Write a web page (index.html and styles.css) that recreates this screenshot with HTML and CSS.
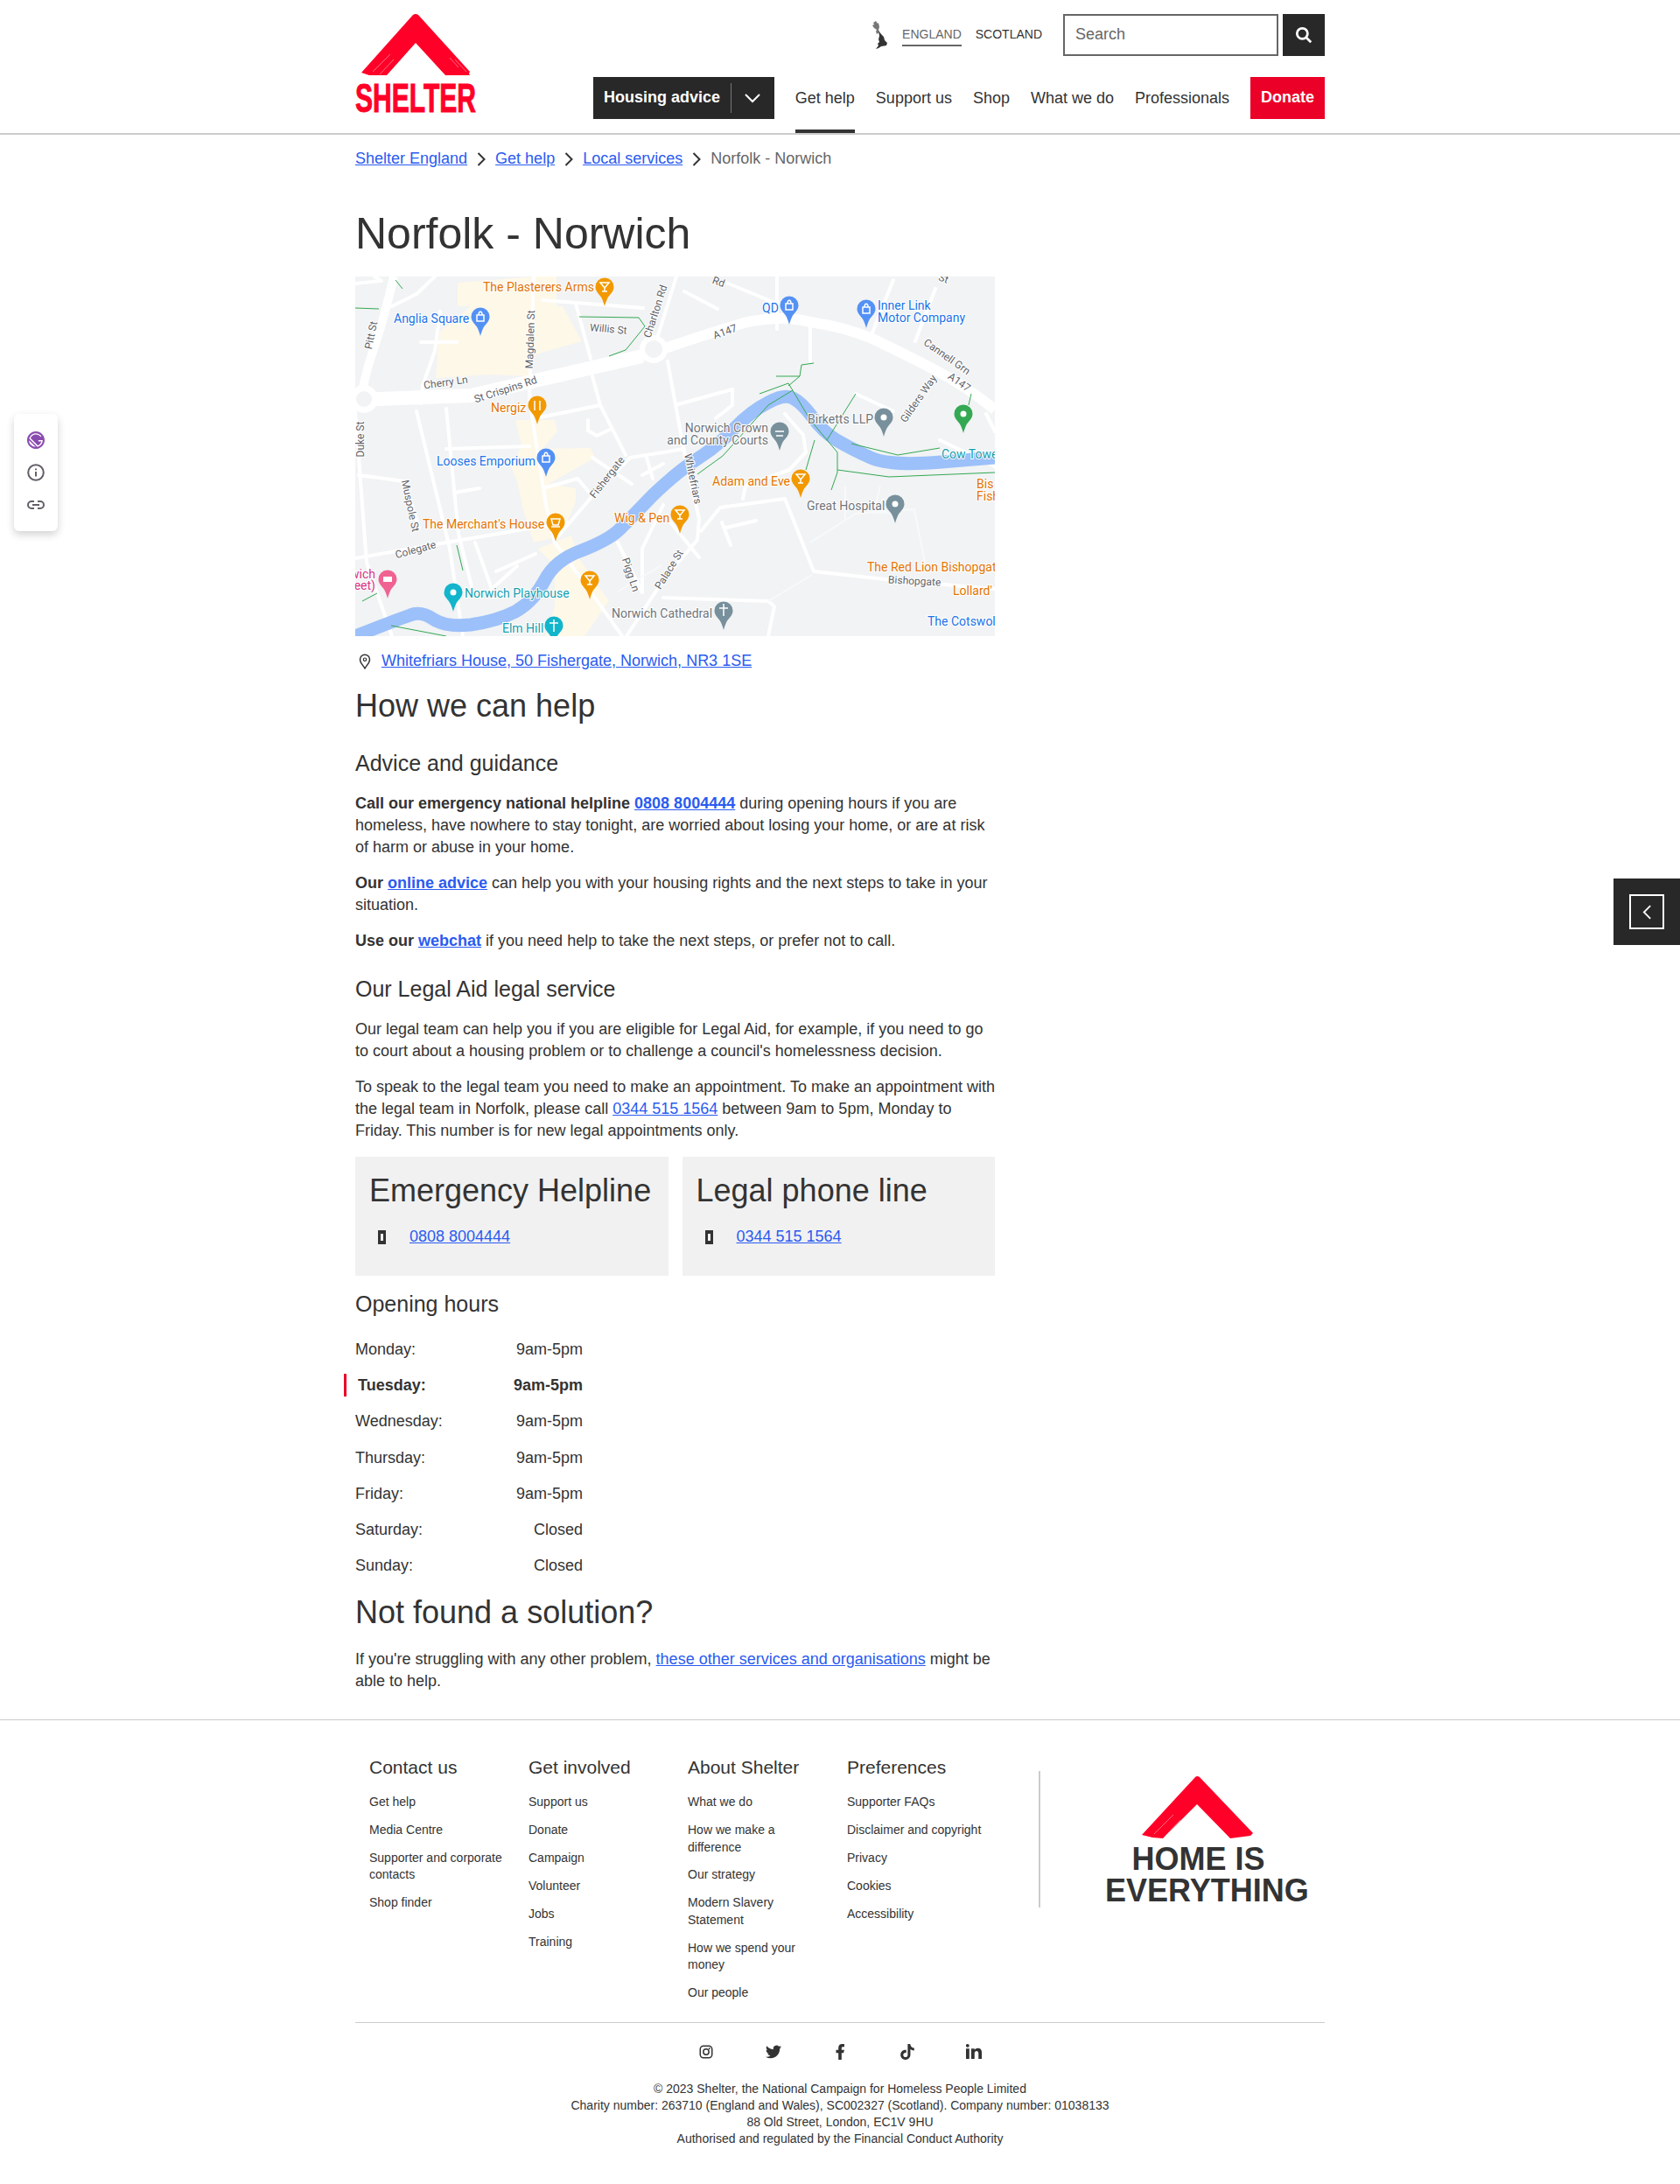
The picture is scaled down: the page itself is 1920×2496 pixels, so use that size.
FILE: index.html
```html
<!DOCTYPE html>
<html lang="en">
<head>
    <meta charset="UTF-8">
    <meta name="viewport" content="width=device-width, initial-scale=1.0">
    <title>Norfolk - Norwich</title>
    <link rel="stylesheet" href="styles.css">
</head>
<body>

    <!-- Floating panels -->
    <div class="side-panel">
        <svg viewBox="0 0 28 28" width="20" height="20"><circle cx="14" cy="14" r="14" fill="#fff"/><path class="gatsby" d="M14 0C6.3 0 0 6.3 0 14s6.3 14 14 14 14-6.3 14-14S21.7 0 14 0zM6.2 21.8C4.1 19.7 3 16.9 3 14.2L13.9 25c-2.8-.1-5.6-1.1-7.7-3.2zm10.2 2.9L3.3 11.6C4.4 6.7 8.8 3 14 3c3.7 0 6.9 1.8 8.9 4.5l-1.5 1.3C19.7 6.5 17 5 14 5c-3.9 0-7.2 2.5-8.5 6L17 22.5c2.9-1 5.1-3.5 5.8-6.5H18v-2h7c0 5.2-3.7 9.6-8.6 10.7z"/></svg>
        <svg class="side-icon" viewBox="0 0 20 20" width="20" height="20"><circle cx="10" cy="10" r="8.8"/><path d="M10 9v5.5M10 5.4v1.8"/></svg>
        <svg class="side-icon" viewBox="0 0 20 20" width="20" height="20"><path d="M8 6H5a4 4 0 0 0 0 8h3M12 6h3a4 4 0 0 1 0 8h-3M6 10h8"/></svg>
    </div>
    <div class="right-panel">
        <div class="right-panel-box">
            <svg viewBox="0 0 12 20" width="11" height="19"><path d="M10 2 2 10l8 8"/></svg>
        </div>
    </div>

    <header class="site-header">
        <div class="wrap header-inner">
            <a class="logo" href="#">
                <svg viewBox="0 0 138 113" width="138" height="113">
                    <path class="brand" d="M66 1q3-2 6 0L131 66l-1 2 1 2H103L69 33 36 70H16l-9-3z"/>
                    <path class="brush" d="M20 66 40 46M28 69 44 52M114 52l13 14M108 50l10 11"/>
                    <text class="logo-word" x="0" y="112" textLength="138" lengthAdjust="spacingAndGlyphs">SHELTER</text>
                </svg>
            </a>
            <div class="header-right">
                <div class="top-row">
                    <svg class="uk-map" viewBox="0 0 20 32" width="20" height="32">
                        <path fill="#777" d="M6 0l2 3 1-1 1 5-1 3 1 3-3 2-1-3 1-2-3-2-2-3 2-1-1-2z"/>
                        <path fill="#333" d="M9 11l3 4 3 3 1 4 3 3-1 3-6 1-3 2-3 1 3-4-1-2 2-2-1-3 1-4z"/>
                    </svg>
                    <a class="nation active" href="#">ENGLAND</a>
                    <a class="nation" href="#">SCOTLAND</a>
                    <div class="search-box">Search</div>
                    <button class="search-btn">
                        <svg viewBox="0 0 20 20" width="22" height="22"><circle cx="8.5" cy="8.5" r="5.5"/><path d="M12.500 12.500l5 5"/></svg>
                    </button>
                </div>
                <nav class="nav-row">
                    <div class="housing-btn">
                        <span class="housing-label">Housing advice</span>
                        <span class="housing-arrow"><svg viewBox="0 0 18 12" width="18" height="12"><path d="M1 2l8 8 8-8"/></svg></span>
                    </div>
                    <a class="nav-link current" href="#">Get help</a>
                    <a class="nav-link" href="#">Support us</a>
                    <a class="nav-link" href="#">Shop</a>
                    <a class="nav-link" href="#">What we do</a>
                    <a class="nav-link" href="#">Professionals</a>
                    <a class="donate" href="#">Donate</a>
                </nav>
            </div>
        </div>
    </header>

    <div class="wrap">
        <div class="breadcrumb">
            <a href="#">Shelter England</a>
            <span class="crumb-sep"><svg viewBox="0 0 10 16" width="10" height="16"><path d="M1.500 1l7 7-7 7"/></svg></span>
            <a href="#">Get help</a>
            <span class="crumb-sep"><svg viewBox="0 0 10 16" width="10" height="16"><path d="M1.500 1l7 7-7 7"/></svg></span>
            <a href="#">Local services</a>
            <span class="crumb-sep"><svg viewBox="0 0 10 16" width="10" height="16"><path d="M1.500 1l7 7-7 7"/></svg></span>
            <span class="crumb-current">Norfolk - Norwich</span>
        </div>

        <main class="content">
            <h1>Norfolk - Norwich</h1>

            <!-- Map -->
            <svg class="map" viewBox="0 0 731 411" width="731" height="411">
                <defs>
                    <path id="pin" d="M0-10.5a10.5 10.5 0 0 1 10.5 10.5c0 6-5 8-7.500 13.500-1.200 2.500-2 5-3 8.500-1-3.500-1.800-6-3-8.500-2.500-5.500-7.500-7.500-7.500-13.500a10.500 10.500 0 0 1 10.500-10.500z"/>
                </defs>
                <rect width="731" height="411" fill="#f1f3f4"/>

                <g class="beige">
                    <path d="M117 7 206 0h24v34h7l22 40-60 17v23l-45-2-62 4 4-52 36-30h-15z"/>
                    <path d="M183 164h45l3 13-17 20 55-1 5 11-53 30 31 5v15l-17 40-31 7-12-37-7-33-7-17 12-23z"/>
                    <path d="M209 311l38-15 10 28 33 47-28 40h-44l10-34v-46z"/>
                </g>

                <g class="road">
                    <path d="M0 154l13 173 29 84"/>
                    <path d="M70 154l38 157 15 100M104 151l14 143 15 60"/>
                    <path d="M0 322l104-18 100-17 38-6M228 301l43-50 43-44 62-10"/>
                    <path d="M204 0l-5 141 19 120 10 43 53 73 24 34"/>
                    <path d="M357 97l19 104 17 76-2 24-39 46-42 64"/>
                    <path d="M367 0l-24 77M491 254l33 83 91 10 116 10M491 254l-74 10-22 27"/>
                    <path d="M520 54v43M615 4l-24 60M663 14l-23 60M424 7l58 24M482 0v60M376 17l38 20"/>
                    <path d="M214 27l115 9M252 31l17 63M271 114l9 33 29 57M211 161l69-14"/>
                    <path d="M369 146l62-17v18l-19 15M104 197l95-3M4 227l52 7 17 53M218 241l36-10 17 20M113 247l29-5"/>
                    <path d="M300 304l28 57M352 261l-24 50v50M357 277l36 44M419 281l10 26M424 287l34-8"/>
                    <path d="M137 304l19 53 29-26M161 337l45-20M491 157l21 24 3 20-19 20-50 18-3 15"/>
                    <path d="M572 134l43 20M668 187l63 30M731 177l-10-20M352 367l120 4 7 6-7 34"/>
                    <path d="M333 207l7 24M352 214l-24 13M271 207l45 30M266 164v12l10 6 17-8"/>
                    <path d="M91 0 70 20 42 34M0 8l30-3M22 0l8 5M97 40l-6 45-14 40-2 20M75 75h41"/>
                </g>
                <g class="road-thin">
                    <path d="M520 304l52-33 67-5 12 61M560 240v40M600 240l-8 30 20 0M300 360l50-30M472 371l50-30"/>
                </g>
                <path class="road-pitt" d="M44 0Q34 45 22 80T8 135"/>
                <path class="road-major" d="M0 141 132 136 328 91"/>
                <path class="road-mid" d="M328 91Q400 66 448 52 490 44 520 52 560 58 591 71 630 90 663 107T731 152"/>
                <circle class="roundabout" cx="341" cy="83" r="16"/>
                <circle class="roundabout-in" cx="341" cy="83" r="10"/>
                <circle class="roundabout" cx="10" cy="140" r="16"/>
                <circle class="roundabout-in" cx="10" cy="140" r="9"/>

                <path class="river" d="M0 411Q51 391 63 387 75 382 90 392 104 401 132 398 161 394 183 383 204 371 216 348 228 324 259 313 290 301 302 289 314 277 340 250 367 224 390 209 414 194 433 174 452 154 472 144 491 134 500 139 510 144 522 160 534 177 550 187 567 197 589 207 610 217 670 212L731 207"/>

                <g class="trail">
                    <path d="M256 46 324 47 331 57 309 84 290 91M391 226 420 205 472 147 500 130M462 134 495 122 520 164 551 201 551 224 544 244"/>
                    <path d="M481 114H508L510 101 524 99M551 221 610 229 731 224M539 187 572 134M515 221 525 187M567 191 620 204 668 196"/>
                    <path d="M704 134 701 147M0 36 27 37M116 307 123 336M8 371 25 362M41 399 104 411M46 4 54 14M508 114 495 125"/>
                </g>

                <!-- Road names -->
                <g class="map-road-text">
                    <text transform="translate(22 68) rotate(-78)" text-anchor="middle">Pitt St</text>
                    <text transform="translate(204 72) rotate(-88)" text-anchor="middle">Magdalen St</text>
                    <text transform="translate(289 64) rotate(5)" text-anchor="middle">Willis St</text>
                    <text transform="translate(347 41) rotate(-72)" text-anchor="middle">Charlton Rd</text>
                    <text transform="translate(104 125) rotate(-8)" text-anchor="middle">Cherry Ln</text>
                    <text transform="translate(173 133) rotate(-18)" text-anchor="middle">St Crispins Rd</text>
                    <text transform="translate(424 67) rotate(-20)" text-anchor="middle">A147</text>
                    <text transform="translate(688 124) rotate(35)" text-anchor="middle">A147</text>
                    <text transform="translate(674 95) rotate(35)" text-anchor="middle">Cannell Grn</text>
                    <text transform="translate(647 142) rotate(-55)" text-anchor="middle">Gilders Way</text>
                    <text transform="translate(10 186) rotate(-90)" text-anchor="middle">Duke St</text>
                    <text transform="translate(291 232) rotate(-52)" text-anchor="middle">Fishergate</text>
                    <text transform="translate(382 232) rotate(78)" text-anchor="middle">Whitefriars</text>
                    <text transform="translate(59 263) rotate(78)" text-anchor="middle">Muspole St</text>
                    <text transform="translate(70 316) rotate(-15)" text-anchor="middle">Colegate</text>
                    <text transform="translate(311 342) rotate(72)" text-anchor="middle">Pigg Ln</text>
                    <text transform="translate(362 337) rotate(-58)" text-anchor="middle">Palace St</text>
                    <text transform="translate(639 352) rotate(3)" text-anchor="middle">Bishopgate</text>
                    <text transform="translate(414 10) rotate(20)" text-anchor="middle">Rd</text>
                    <text transform="translate(671 6) rotate(20)" text-anchor="middle">St</text>
                </g>

                <!-- Pins -->
                <use href="#pin" x="285" y="12" fill="#f29900"/>
                <use href="#pin" x="143" y="46" fill="#5491f5"/>
                <use href="#pin" x="496" y="33" fill="#5491f5"/>
                <use href="#pin" x="584" y="37" fill="#5491f5"/>
                <use href="#pin" x="208" y="147" fill="#f29900"/>
                <use href="#pin" x="218" y="207" fill="#5491f5"/>
                <use href="#pin" x="229" y="281" fill="#f29900"/>
                <use href="#pin" x="371" y="272" fill="#f29900"/>
                <use href="#pin" x="509" y="231" fill="#f29900"/>
                <use href="#pin" x="485" y="177" fill="#78909c"/>
                <use href="#pin" x="604" y="161" fill="#78909c"/>
                <use href="#pin" x="617" y="260" fill="#78909c"/>
                <use href="#pin" x="695" y="157" fill="#34a853"/>
                <use href="#pin" x="268" y="347" fill="#f29900"/>
                <use href="#pin" x="421" y="382" fill="#78909c"/>
                <use href="#pin" x="227" y="399" fill="#12b5cb"/>
                <use href="#pin" x="112" y="361" fill="#12b5cb"/>
                <use href="#pin" x="37" y="346" fill="#f06292"/>

                <!-- Pin glyphs -->
                <g class="pin-glyph">
                    <path d="M280 7h10l-5 6zM285 13v4M282 17h6"/>
                    <path d="M139 44h8v7h-8zM141 44c0-5 4-5 4 0"/>
                    <path d="M492 31h8v7h-8zM494 31c0-5 4-5 4 0"/>
                    <path d="M580 35h8v7h-8zM582 35c0-5 4-5 4 0"/>
                    <path d="M205 142v5M205 147v6M211 142v11"/>
                    <path d="M214 205h8v7h-8zM216 205c0-5 4-5 4 0"/>
                    <path d="M224 277h10l-2 7h-6zM224 286h10"/>
                    <path d="M366 267h10l-5 6zM371 273v4M368 277h6"/>
                    <path d="M504 226h10l-5 6zM509 232v4M506 236h6"/>
                    <path d="M263 342h10l-5 6zM268 348v4M265 352h6"/>
                    <path d="M421 374v14M416 379h10"/>
                    <path d="M227 392v14M222 396h10"/>
                    <path d="M480 177h10M481 182h8"/>
                </g>
                <circle cx="604" cy="161" r="3.500" fill="#fff"/>
                <circle cx="617" cy="260" r="3.500" fill="#fff"/>
                <circle cx="695" cy="157" r="3.500" fill="#fff"/>
                <circle cx="112" cy="361" r="3.500" fill="#fff"/>
                <rect x="32" y="343" width="10" height="6" fill="#fff"/>

                <!-- Place names -->
                <g class="poi poi-orange">
                    <text x="146" y="17">The Plasterers Arms</text>
                    <text x="155" y="155">Nergiz</text>
                    <text x="77" y="288">The Merchant's House</text>
                    <text x="296" y="281">Wig &amp; Pen</text>
                    <text x="408" y="239">Adam and Eve</text>
                    <text x="710" y="242">Bis</text>
                    <text x="710" y="256">Fish</text>
                    <text x="585" y="337">The Red Lion Bishopgat</text>
                    <text x="683" y="364">Lollard'</text>
                </g>
                <g class="poi poi-blue">
                    <text x="44" y="53">Anglia Square</text>
                    <text x="597" y="38">Inner Link</text>
                    <text x="597" y="52">Motor Company</text>
                    <text x="465" y="41">QD</text>
                    <text x="93" y="216">Looses Emporium</text>
                    <text x="654" y="399">The Cotswol</text>
                </g>
                <g class="poi poi-grey">
                    <text x="472" y="178" text-anchor="end">Norwich Crown</text>
                    <text x="472" y="192" text-anchor="end">and County Courts</text>
                    <text x="517" y="168">Birketts LLP</text>
                    <text x="516" y="267">Great Hospital</text>
                    <text x="293" y="390">Norwich Cathedral</text>
                </g>
                <g class="poi poi-teal">
                    <text x="670" y="208">Cow Towe</text>
                    <text x="168" y="407">Elm Hill</text>
                    <text x="125" y="367">Norwich Playhouse</text>
                </g>
                <g class="poi poi-pink">
                    <text x="23" y="345" text-anchor="end">wich</text>
                    <text x="23" y="358" text-anchor="end">eet)</text>
                </g>
            </svg>

            <div class="address">
                <svg viewBox="0 0 14 18" width="14" height="18"><path d="M7 1.200a5.500 5.500 0 0 1 5.500 5.500C12.500 10.500 9 13.500 7 16.800 5 13.500 1.500 10.500 1.500 6.700A5.500 5.500 0 0 1 7 1.200z"/><circle cx="7" cy="6.700" r="1.700"/></svg>
                <a href="#">Whitefriars House, 50 Fishergate, Norwich, NR3 1SE</a>
            </div>

            <h2 class="help-title">How we can help</h2>

            <h3 class="advice-title">Advice and guidance</h3>
            <p class="first"><strong>Call our emergency national helpline <a href="#">0808 8004444</a></strong> during opening hours if you are homeless, have nowhere to stay tonight, are worried about losing your home, or are at risk of harm or abuse in your home.</p>
            <p><strong>Our <a href="#">online advice</a></strong> can help you with your housing rights and the next steps to take in your situation.</p>
            <p><strong>Use our <a href="#">webchat</a></strong> if you need help to take the next steps, or prefer not to call.</p>

            <h3 class="legal-title">Our Legal Aid legal service</h3>
            <p class="first">Our legal team can help you if you are eligible for Legal Aid, for example, if you need to go to court about a housing problem or to challenge a council's homelessness decision.</p>
            <p>To speak to the legal team you need to make an appointment. To make an appointment with the legal team in Norfolk, please call <a href="#">0344 515 1564</a> between 9am to 5pm, Monday to Friday. This number is for new legal appointments only.</p>

            <div class="cards">
                <div class="card">
                    <h2>Emergency Helpline</h2>
                    <div class="phone"><span class="phone-icon"></span><a href="#">0808 8004444</a></div>
                </div>
                <div class="card">
                    <h2>Legal phone line</h2>
                    <div class="phone"><span class="phone-icon"></span><a href="#">0344 515 1564</a></div>
                </div>
            </div>

            <h3 class="hours-title">Opening hours</h3>
            <div class="hours">
                <div class="hours-row"><span>Monday:</span><span>9am-5pm</span></div>
                <div class="hours-row today"><span>Tuesday:</span><span>9am-5pm</span></div>
                <div class="hours-row"><span>Wednesday:</span><span>9am-5pm</span></div>
                <div class="hours-row"><span>Thursday:</span><span>9am-5pm</span></div>
                <div class="hours-row"><span>Friday:</span><span>9am-5pm</span></div>
                <div class="hours-row"><span>Saturday:</span><span>Closed</span></div>
                <div class="hours-row"><span>Sunday:</span><span>Closed</span></div>
            </div>

            <h2 class="solution-title">Not found a solution?</h2>
            <p class="first">If you're struggling with any other problem, <a href="#">these other services and organisations</a> might be able to help.</p>
        </main>
    </div>

    <footer class="site-footer">
        <div class="wrap">
            <div class="footer-top">
                <div class="footer-col">
                    <h4>Contact us</h4>
                    <a href="#">Get help</a>
                    <a href="#">Media Centre</a>
                    <a href="#">Supporter and corporate contacts</a>
                    <a href="#">Shop finder</a>
                </div>
                <div class="footer-col">
                    <h4>Get involved</h4>
                    <a href="#">Support us</a>
                    <a href="#">Donate</a>
                    <a href="#">Campaign</a>
                    <a href="#">Volunteer</a>
                    <a href="#">Jobs</a>
                    <a href="#">Training</a>
                </div>
                <div class="footer-col">
                    <h4>About Shelter</h4>
                    <a href="#">What we do</a>
                    <a href="#">How we make a difference</a>
                    <a href="#">Our strategy</a>
                    <a href="#">Modern Slavery Statement</a>
                    <a href="#">How we spend your money</a>
                    <a href="#">Our people</a>
                </div>
                <div class="footer-col">
                    <h4>Preferences</h4>
                    <a href="#">Supporter FAQs</a>
                    <a href="#">Disclaimer and copyright</a>
                    <a href="#">Privacy</a>
                    <a href="#">Cookies</a>
                    <a href="#">Accessibility</a>
                </div>
                <div class="footer-brand">
                    <svg viewBox="0 0 128 72" width="128" height="72">
                        <path class="brand" d="M61 1q2-2 5 0L127 65l-3 3-23 3L63 32 24 71 12 70 0 67z"/>
                        <path class="brush" d="M14 66 36 44M26 69 44 50"/>
                    </svg>
                    <div class="home-text"><div class="home-line">HOME IS</div>EVERYTHING</div>
                </div>
            </div>

            <div class="social">
                <svg viewBox="0 0 24 24" width="18" height="18"><rect class="ig" x="3" y="3" width="18" height="18" rx="5"/><circle class="ig" cx="12" cy="12" r="4.200"/><circle cx="17" cy="7" r="1.200"/></svg>
                <svg viewBox="0 0 24 24" width="18" height="18"><path d="M23.953 4.570a10 10 0 0 1-2.825.775 4.958 4.958 0 0 0 2.163-2.723c-.951.555-2.005.959-3.127 1.184a4.920 4.920 0 0 0-8.384 4.482C7.690 8.095 4.067 6.130 1.640 3.162a4.822 4.822 0 0 0-.666 2.475c0 1.710.870 3.213 2.188 4.096a4.904 4.904 0 0 1-2.228-.616v.060a4.923 4.923 0 0 0 3.946 4.827 4.996 4.996 0 0 1-2.212.085 4.936 4.936 0 0 0 4.604 3.417 9.867 9.867 0 0 1-6.102 2.105c-.390 0-.779-.023-1.170-.067a13.995 13.995 0 0 0 7.557 2.209c9.053 0 13.998-7.496 13.998-13.985 0-.210 0-.420-.015-.630A9.935 9.935 0 0 0 24 4.590z"/></svg>
                <svg viewBox="2 2 20 20" width="18" height="18"><path d="M14 13.500h2.500l1-4H14v-2c0-1.030 0-2 2-2h1.500V2.140c-.326-.043-1.557-.14-2.857-.14C11.928 2 10 3.657 10 6.700v2.800H7v4h3V22h4v-8.500z"/></svg>
                <svg viewBox="0 0 24 24" width="18" height="18"><path d="M12.525.020c1.310-.020 2.610-.010 3.910-.020.080 1.530.630 3.090 1.750 4.170 1.120 1.110 2.700 1.620 4.240 1.790v4.030c-1.440-.050-2.890-.350-4.200-.970-.570-.260-1.100-.590-1.620-.930-.010 2.920.010 5.840-.020 8.750-.080 1.400-.540 2.790-1.350 3.940-1.310 1.920-3.580 3.170-5.910 3.210-1.430.080-2.860-.310-4.080-1.030-2.020-1.190-3.440-3.370-3.650-5.710-.020-.500-.030-1-.010-1.490.180-1.900 1.120-3.720 2.580-4.960 1.660-1.440 3.980-2.130 6.150-1.720.020 1.480-.040 2.960-.040 4.440-.990-.320-2.150-.230-3.020.370-.630.410-1.110 1.040-1.360 1.750-.210.510-.150 1.070-.140 1.610.240 1.640 1.820 3.020 3.500 2.870 1.120-.010 2.190-.660 2.770-1.610.190-.330.400-.670.410-1.060.100-1.790.060-3.570.070-5.360.010-4.030-.010-8.050.020-12.070z"/></svg>
                <svg viewBox="3 3 19 19" width="18" height="18"><path d="M6.940 5a2 2 0 1 1-4-.002 2 2 0 0 1 4 .002zM7 8.480H3V21h4V8.480zm6.320 0H9.340V21h3.940v-6.570c0-3.660 4.770-4 4.770 0V21H22v-7.930c0-6.170-7.060-5.940-8.720-2.910l.040-1.680z"/></svg>
            </div>

            <div class="legal">
                <div>&copy; 2023 Shelter, the National Campaign for Homeless People Limited</div>
                <div>Charity number: 263710 (England and Wales), SC002327 (Scotland). Company number: 01038133</div>
                <div>88 Old Street, London, EC1V 9HU</div>
                <div>Authorised and regulated by the Financial Conduct Authority</div>
            </div>
        </div>
    </footer>

</body>
</html>
```

FILE: styles.css
```css
body {
    margin: 0;
    font-family: "Liberation Sans", Arial, sans-serif;
    font-size: 18px;
    line-height: 25px;
    color: #333;
    background: white;
    position: relative;
}

a {
    color: #2a5bf0;
}

.wrap {
    width: 1108px;
    margin: 0 auto;
}

/* Floating panels */
.side-panel {
    position: absolute;
    left: 16px;
    top: 473px;
    width: 50px;
    height: 134px;
    background: white;
    border-radius: 6px;
    box-shadow: 0 4px 10px rgba(0, 0, 0, 0.18);
    display: flex;
    flex-direction: column;
    align-items: center;
    justify-content: center;
    gap: 17px;
}

.gatsby {
    fill: #8a4baf;
}

.side-icon {
    fill: none;
    stroke: #635e69;
    stroke-width: 2;
}

.right-panel {
    position: absolute;
    right: 0;
    top: 1004px;
    width: 76px;
    height: 76px;
    background: #282828;
    display: flex;
    align-items: center;
    padding-left: 18px;
    box-sizing: border-box;
}

.right-panel-box {
    width: 40px;
    height: 40px;
    box-sizing: border-box;
    border: 2px solid white;
    display: flex;
    align-items: center;
    justify-content: center;
}

.right-panel-box path {
    fill: none;
    stroke: white;
    stroke-width: 2;
}

/* Header */
.site-header {
    height: 152px;
    border-bottom: 2px solid #ccc;
}

.header-inner {
    display: flex;
    justify-content: space-between;
    padding-top: 16px;
}

.logo {
    display: block;
    height: 113px;
}

.brand {
    fill: #ff0028;
}

.brush {
    fill: none;
    stroke: white;
    stroke-width: 0.6;
    opacity: 0.7;
}

.logo-word {
    font-family: "Liberation Sans", Arial, sans-serif;
    font-weight: bold;
    font-size: 46px;
    fill: #ff0028;
    stroke: #ff0028;
    stroke-width: 1;
}

.header-right {
    width: 836px;
}

.top-row {
    display: flex;
    align-items: center;
    justify-content: flex-end;
    height: 48px;
    margin-bottom: 24px;
}

.uk-map {
    margin-right: 16px;
}

.nation {
    font-size: 14px;
    color: #333;
    text-decoration: none;
    line-height: 32px;
    height: 30px;
    margin: -4px 16px 0 0;
    box-sizing: border-box;
}

.nation.active {
    color: #666;
    border-bottom: 2px solid #666;
}

.nation:nth-of-type(2) {
    margin-right: 24px;
}

.search-box {
    width: 246px;
    height: 48px;
    box-sizing: border-box;
    border: 2px solid #666;
    padding: 0 12px;
    line-height: 42px;
    color: #666;
}

.search-btn {
    width: 48px;
    height: 48px;
    margin-left: 5px;
    border: none;
    padding: 0;
    background: #282828;
    display: flex;
    align-items: center;
    justify-content: center;
}

.search-btn svg {
    fill: none;
    stroke: white;
    stroke-width: 2.5;
}

.nav-row {
    display: flex;
    align-items: flex-start;
}

.housing-btn {
    width: 207px;
    height: 48px;
    background: #282828;
    color: white;
    font-weight: bold;
    display: flex;
    align-items: center;
    padding-left: 12px;
    box-sizing: border-box;
    margin-right: 24px;
}

.housing-label {
    width: 145px;
    margin-top: -2px;
}

.housing-arrow {
    border-left: 1px solid #777;
    height: 34px;
    padding-left: 15px;
    display: flex;
    align-items: center;
}

.housing-arrow path {
    fill: none;
    stroke: white;
    stroke-width: 2;
}

.nav-link {
    height: 64px;
    box-sizing: border-box;
    line-height: 48px;
    color: #333;
    text-decoration: none;
    margin-right: 24px;
    white-space: nowrap;
}

.nav-link.current {
    border-bottom: 4px solid #333;
}

.donate {
    width: 85px;
    height: 48px;
    background: #eb0027;
    color: white;
    font-weight: bold;
    text-align: center;
    line-height: 46px;
    text-decoration: none;
}

/* Breadcrumb */
.breadcrumb {
    display: flex;
    align-items: center;
    height: 25px;
    padding-top: 15px;
}

.crumb-sep {
    width: 32px;
    display: flex;
    justify-content: center;
}

.crumb-sep path {
    fill: none;
    stroke: #333;
    stroke-width: 2;
}

.crumb-current {
    color: #666;
}

/* Main column */
.content {
    width: 731px;
}

h1 {
    font-size: 50px;
    line-height: 60px;
    font-weight: normal;
    margin: 43px 0 19px;
}

h2 {
    font-size: 36px;
    line-height: 44px;
    font-weight: normal;
    margin: 0;
}

h3 {
    font-size: 25px;
    line-height: 30px;
    font-weight: normal;
    margin: 0;
}

p {
    width: 735px;
    margin: 16px 0 0;
}

p.first {
    margin-top: 19px;
}

.map {
    display: block;
}

.beige {
    fill: #fef8e8;
}

.road path {
    fill: none;
    stroke: white;
    stroke-width: 4;
    stroke-linecap: round;
    stroke-linejoin: round;
}

.road-thin path {
    fill: none;
    stroke: #f8f9fa;
    stroke-width: 2;
}

.road-pitt {
    fill: none;
    stroke: white;
    stroke-width: 10;
}

.road-major {
    fill: none;
    stroke: white;
    stroke-width: 16;
    stroke-linejoin: round;
}

.road-mid {
    fill: none;
    stroke: white;
    stroke-width: 12;
}

.roundabout {
    fill: white;
}

.roundabout-in {
    fill: #f1f3f4;
}

.river {
    fill: none;
    stroke: #9cc0f9;
    stroke-width: 15;
    stroke-linejoin: round;
}

.trail path {
    fill: none;
    stroke: #34a853;
    stroke-width: 1;
}

.map-road-text text {
    font-family: Roboto, sans-serif;
    font-size: 12px;
    fill: #5f6368;
    stroke: white;
    stroke-width: 2px;
    paint-order: stroke;
}

.pin-glyph path {
    fill: none;
    stroke: white;
    stroke-width: 1.5;
}

.poi text {
    font-family: Roboto, sans-serif;
    font-size: 14px;
    stroke: white;
    stroke-width: 2px;
    paint-order: stroke;
}

.poi-orange text {
    fill: #e37400;
}

.poi-blue text {
    fill: #1a73e8;
}

.poi-grey text {
    fill: #70757a;
}

.poi-teal text {
    fill: #129eaf;
}

.poi-pink text {
    fill: #d6337f;
}

.address {
    display: flex;
    align-items: center;
    gap: 12px;
    margin: 16px 0 0 4px;
}

.address path {
    fill: none;
    stroke: #333;
    stroke-width: 1.5;
}

.address circle {
    fill: none;
    stroke: #333;
    stroke-width: 1.2;
}

.help-title {
    margin-top: 17px;
}

.advice-title {
    margin-top: 28px;
}

.legal-title {
    margin-top: 27px;
}

.cards {
    display: flex;
    gap: 16px;
    margin-top: 17px;
}

.card {
    flex: 1;
    height: 136px;
    box-sizing: border-box;
    background: #f1f1f1;
    padding: 17px 16px 0;
}

.phone {
    display: flex;
    align-items: center;
    margin-top: 18px;
    padding-left: 10px;
}

.phone-icon {
    width: 9px;
    height: 16px;
    box-sizing: border-box;
    background: #333;
    border: solid #333;
    border-width: 2px 2px 2px 2px;
    margin-right: 27px;
    position: relative;
}

.phone-icon::after {
    content: "";
    position: absolute;
    left: 1px;
    top: 2px;
    width: 3px;
    height: 8px;
    background: #f1f1f1;
}

.hours-title {
    margin-top: 17px;
}

.hours {
    display: flex;
    flex-direction: column;
    gap: 15.2px;
    width: 260px;
    margin-top: 24px;
    line-height: 26px;
}

.hours-row {
    display: flex;
    justify-content: space-between;
}

.hours-row.today {
    font-weight: bold;
    margin-left: -13px;
    padding-left: 13px;
    border-left: 3px solid #eb0027;
}

.solution-title {
    margin-top: 19px;
}

/* Footer */
.site-footer {
    margin-top: 31px;
    border-top: 1px solid #ccc;
}

.footer-top {
    display: flex;
    padding: 42px 0 0 16px;
    height: 303px;
    box-sizing: content-box;
    border-bottom: 1px solid #ccc;
}

.footer-col {
    width: 182px;
    box-sizing: border-box;
    padding-right: 26px;
    font-size: 14px;
    line-height: 19.5px;
}

.footer-col h4 {
    font-size: 21px;
    line-height: 24px;
    font-weight: normal;
    margin: 0 0 18px;
}

.footer-col a {
    display: block;
    color: #333;
    text-decoration: none;
    margin-bottom: 12.4px;
}

.footer-brand {
    height: 156px;
    margin: 16px 0 0 37px;
    border-left: 2px solid #ccc;
    padding-left: 74px;
    width: 250px;
}

.footer-brand svg {
    display: block;
    margin: 6px 0 5px 42px;
}

.home-text {
    font-size: 36px;
    line-height: 36px;
    font-weight: bold;
    white-space: nowrap;
    text-align: center;
    width: 232px;
}

.home-line {
    padding-right: 19px;
}

.social {
    display: flex;
    justify-content: center;
    gap: 58.5px;
    padding-top: 24px;
}

.social svg {
    fill: #333;
}

.social .ig {
    fill: none;
    stroke: #333;
    stroke-width: 2;
}

.legal {
    text-align: center;
    font-size: 14px;
    line-height: 19px;
    margin-top: 24px;
    padding-bottom: 41px;
}
```
